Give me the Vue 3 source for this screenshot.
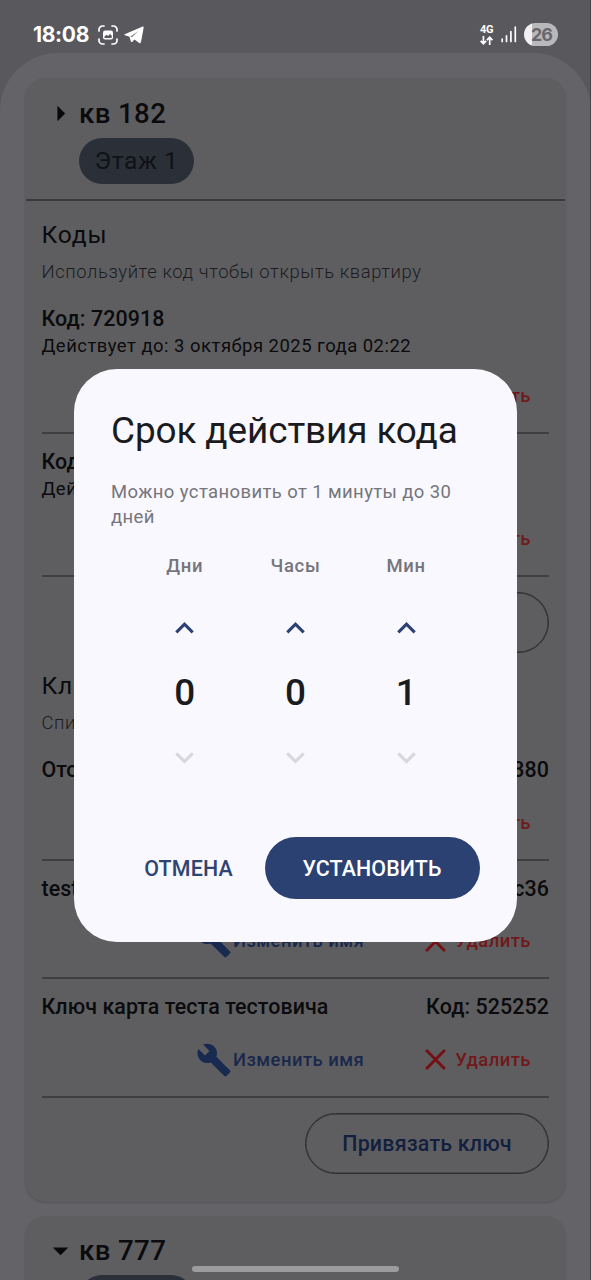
<script setup>
const codes = [
  { code: 'Код: 720918', until: 'Действует до: 3 октября 2025 года 02:22' },
  { code: 'Код: 720917', until: 'Действует до: 3 октября' },
]
const keys = [
  { name: 'Отсутствует', code: 'Код: 120380' },
  { name: 'test', code: 'Код: 5a7c36' },
  { name: 'Ключ карта теста тестовича', code: 'Код: 525252' },
]
const units = [
  { label: 'Дни', value: 0 },
  { label: 'Часы', value: 0 },
  { label: 'Мин', value: 1 },
]
const wrench =
  'M22.7 19l-9.1-9.1c.9-2.3.4-5-1.5-6.9-2-2-5-2.4-7.4-1.3L9 6 6 9 1.6 4.7C.4 7.1.9 10.1 2.9 12.1c1.9 1.9 4.6 2.4 6.9 1.5l9.1 9.1c.4.4 1 .4 1.4 0l2.3-2.3c.5-.4.5-1.1.1-1.4z'
</script>

<template>
  <div class="screen">
    <header class="status">
      <span class="time">18:08</span>
      <svg class="shot" viewBox="0 0 20 20" fill="none" stroke="#fff" stroke-width="1.7" stroke-linecap="round">
        <path d="M1 6V4.5A3.5 3.5 0 0 1 4.500 1H6M14 1h1.500A3.500 3.500 0 0 1 19 4.500V6M19 14v1.500a3.500 3.500 0 0 1-3.500 3.500H14M6 19H4.500A3.500 3.500 0 0 1 1 15.500V14" />
        <rect x="5" y="5.500" width="10" height="9" rx="2" fill="#fff" stroke="none" />
        <path d="M6.500 13v-1.500l2-1.800 1.500 1.200 2-2 1.700 1.700V13z" fill="#59585d" stroke="none" />
      </svg>
      <svg class="plane" viewBox="0 0 20 18">
        <path d="M.7 8.300 18.200.7c.9-.4 1.600.1 1.400 1.200L17 16c-.2 1.100-.9 1.400-1.800.9L10.500 13.500 8.300 15.700c-.6.6-1.300.4-1.500-.5L5.500 10.700 1 9.300C.2 9.100.1 8.600.7 8.300z" fill="#fff" />
        <path d="M6.200 10.500 14.500 5 8 11.200z" fill="#59585d" opacity=".7" />
      </svg>
      <span class="spacer"></span>
      <span class="net">
        <b>4G</b>
        <svg width="13" height="9" viewBox="0 0 13 9" fill="none" stroke="#fff" stroke-width="1.700">
          <path d="M3.400 0v7.500M.6 4.800l2.800 2.900 2.800-2.900M9.700 9V1.300M6.900 4.200l2.800-2.900 2.800 2.900" />
        </svg>
      </span>
      <svg class="bars" width="16" height="17" viewBox="0 0 16 17" stroke="#fff" stroke-width="1.700" stroke-linecap="round">
        <path d="M1.200 13v2.500M5.500 9.800v5.700M9.900 5.500v10M14.300 1.200v14.300" />
      </svg>
      <span class="battery">26</span>
    </header>

    <main class="sheet">
      <section class="card">
        <div class="head">
          <div class="head-row">
            <svg class="ic" viewBox="0 0 24 24"><path d="M10 17l5-5-5-5z" fill="#08080a" /></svg>
            <h2>кв 182</h2>
          </div>
          <span class="pill">Этаж 1</span>
        </div>
        <div class="line"></div>

        <div class="body">
          <h3>Коды</h3>
          <p class="hint">Используйте код чтобы открыть квартиру</p>
          <div v-for="c in codes" :key="c.code" class="item code">
            <div class="row"><span>{{ c.code }}</span></div>
            <div class="until">{{ c.until }}</div>
            <div class="acts">
              <svg class="x" viewBox="0 0 22 22"><path d="M2 2l18 18M20 2L2 20" /></svg>
              <span class="del">Удалить</span>
            </div>
            <div class="line"></div>
          </div>
          <button class="outlined">Добавить код</button>

          <h3 class="second">Ключи</h3>
          <p class="hint">Список ключей</p>
          <div v-for="k in keys" :key="k.code" class="item key">
            <div class="row"><span>{{ k.name }}</span><span>{{ k.code }}</span></div>
            <div class="acts">
              <svg class="wrench" viewBox="0 0 24 24"><path :d="wrench" /></svg>
              <span class="edit">Изменить имя</span>
              <svg class="x" viewBox="0 0 22 22"><path d="M2 2l18 18M20 2L2 20" /></svg>
              <span class="del">Удалить</span>
            </div>
            <div class="line"></div>
          </div>
          <button class="outlined">Привязать ключ</button>
        </div>
      </section>

      <section class="card">
        <div class="head">
          <div class="head-row">
            <svg class="ic" viewBox="0 0 24 24"><path d="M7 10l5 5 5-5z" fill="#08080a" /></svg>
            <h2>кв 777</h2>
          </div>
          <span class="pill"></span>
        </div>
      </section>
    </main>

    <div class="edge"></div>
    <div class="home"></div>

    <div class="dialog" role="dialog">
      <h1>Срок действия кода</h1>
      <p class="sub">Можно установить от 1 минуты до 30 дней</p>
      <div class="cols">
        <div v-for="u in units" :key="u.label" class="col">
          <span class="unit">{{ u.label }}</span>
          <span class="step">
            <svg viewBox="0 0 24 24"><path d="M6.700 14.500 12 9.200l5.300 5.300" stroke="#2a4172" /></svg>
          </span>
          <span class="num">{{ u.value }}</span>
          <span class="step">
            <svg viewBox="0 0 24 24"><path d="M6.700 9.300 12 14.600l5.300-5.300" stroke="#d8d7dc" /></svg>
          </span>
        </div>
      </div>
      <div class="buttons">
        <button class="cancel">ОТМЕНА</button>
        <button class="ok">УСТАНОВИТЬ</button>
      </div>
    </div>
  </div>
</template>

<style>
body { background: #59585d; }
</style>

<style scoped>
.screen {
  position: relative;
  width: 591px;
  height: 1280px;
  overflow: hidden;
  background: #59585d;
  font-family: Roboto, "Noto Sans", sans-serif;
  color: #0b0b0d;
}
h1, h2, h3, p { margin: 0; font-weight: 400; }
button { font-family: inherit; padding: 0; background: none; border: 0; }

.status { display: flex; align-items: center; height: 53px; padding: 16px 33px 0 33px; box-sizing: border-box; color: #fff; }
.time { width: 65px; font: 700 21px/24px Inter, Roboto, sans-serif; letter-spacing: -0.3px; }
.shot { width: 20px; height: 20px; }
.plane { width: 20px; height: 18px; margin: 1px 0 0 6px; }
.spacer { flex: 1; }
.net { display: flex; flex-direction: column; gap: 2px; width: 14px; }
.net b { font: 700 11px/9px Roboto, sans-serif; letter-spacing: -.3px; }
.bars { margin: 0 7px 0 7px; }
.battery {
  width: 34px; height: 23px; border-radius: 12px; box-sizing: border-box; padding-left: 7px;
  background: linear-gradient(90deg, #f1f1f3 0 8px, #b9b9bc 8px);
  color: #68686c; font: 700 18px/23px Inter, Roboto, sans-serif; letter-spacing: -1px;
}

.sheet {
  display: flex; flex-direction: column; gap: 14px;
  height: 1400px; box-sizing: border-box; padding: 25px 25px 0;
  background: #646468; border-radius: 58px 58px 0 0;
}
.card { background: #5e5e60; border-radius: 21px; box-shadow: 0 1px 2px rgba(0, 0, 0, .18); }
.head { display: flex; flex-direction: column; align-items: flex-start; padding: 17px 17px 15px; }
.card + .card .head { padding-top: 16px; }
.head-row { display: flex; align-items: center; height: 37px; }
.ic { width: 37px; height: 37px; }
h2 { font-size: 27.700px; line-height: 37px; font-weight: 500; letter-spacing: .35px; }
.pill {
  margin: 6px 0 0 37px; width: 115px; height: 46px; box-sizing: border-box; padding-left: 15.500px;
  border-radius: 23px; background: #2b2f38; color: #101217;
  font-size: 24.600px; line-height: 46px; letter-spacing: .6px; white-space: nowrap;
}
.line { height: 2px; background: #39393b; margin: 0 1px; }
.body { display: flex; flex-direction: column; padding: 15px 17px 28px 16.500px; }
h3 { font-size: 24.600px; line-height: 37px; letter-spacing: .8px; }
.hint { margin-top: 7px; font-size: 18.470px; line-height: 24px; font-weight: 300; letter-spacing: .57px; color: #1c1c1f; }
.item .line { margin: 0; background: #3f3f42; }
.row { display: flex; justify-content: space-between; height: 31px; font-size: 21.400px; line-height: 31px; font-weight: 500; letter-spacing: .08px; }
.until { font-size: 18.470px; line-height: 24px; letter-spacing: .49px; }
.acts { display: flex; align-items: center; justify-content: flex-end; margin-top: 7px; padding-right: 18px; font-size: 18.470px; font-weight: 500; letter-spacing: .45px; }
.hint + .item { margin-top: 19px; }
.item + .item { margin-top: 12px; }
.code .acts { height: 62px; margin-bottom: 5px; }
.key .acts { height: 61px; margin-bottom: 5.500px; }
.x { width: 23px; height: 23px; fill: none; stroke: #750f13; stroke-width: 2.700; stroke-linecap: butt; }
.del { margin-left: 8px; color: #70191b; }
.wrench { width: 36px; height: 36px; fill: #182a50; margin-right: 1px; }
.edit { color: #1a284c; margin-right: 60px; }
.outlined {
  align-self: flex-end; margin-top: 15px; width: 244px; height: 61px; border: 1px solid #2f2f31; border-radius: 31px;
  box-shadow: inset 0 0 0 .5px #2f2f31;
  font-size: 21.400px; font-weight: 500; letter-spacing: .2px; color: #131f3e;
}
.second { margin-top: 14px; }

.edge { position: absolute; top: 0; right: 0; width: 1px; height: 100%; background: #47474a; }
.home { position: absolute; left: 192px; top: 1266px; width: 207px; height: 6px; border-radius: 3px; background: #9c9c9e; }

.dialog {
  position: absolute; left: 74px; top: 369px; width: 443px; height: 573px; box-sizing: border-box;
  padding: 37px 37px 0; border-radius: 43px; background: #f9f8fe; color: #1a1b20;
}
h1 { font-size: 36.900px; line-height: 49px; letter-spacing: -.1px; white-space: nowrap; }
.sub { margin-top: 25px; font-size: 18.470px; line-height: 24.600px; letter-spacing: .41px; color: #75757b; }
.cols { display: flex; justify-content: center; margin-top: 25px; }
.col { display: flex; flex-direction: column; align-items: center; width: 110.700px; }
.unit { font-size: 18.470px; line-height: 25px; font-weight: 500; letter-spacing: .7px; color: #75757b; }
.step { display: flex; align-items: center; justify-content: center; height: 74px; }
.unit + .step { margin-top: 12px; }
.step svg { width: 37px; height: 37px; fill: none; stroke-width: 2; }
.num { font-size: 36.900px; line-height: 55px; font-weight: 500; }
.buttons { display: flex; justify-content: flex-end; align-items: center; margin-top: 43px; }
.cancel { font-size: 21.400px; font-weight: 500; letter-spacing: .2px; color: #2f4470; margin-right: 32px; }
.ok { width: 215px; height: 62px; padding-right: 1px; border-radius: 31px; background: #2a4172; color: #fff; font-size: 21.400px; font-weight: 500; letter-spacing: .1px; }
</style>
